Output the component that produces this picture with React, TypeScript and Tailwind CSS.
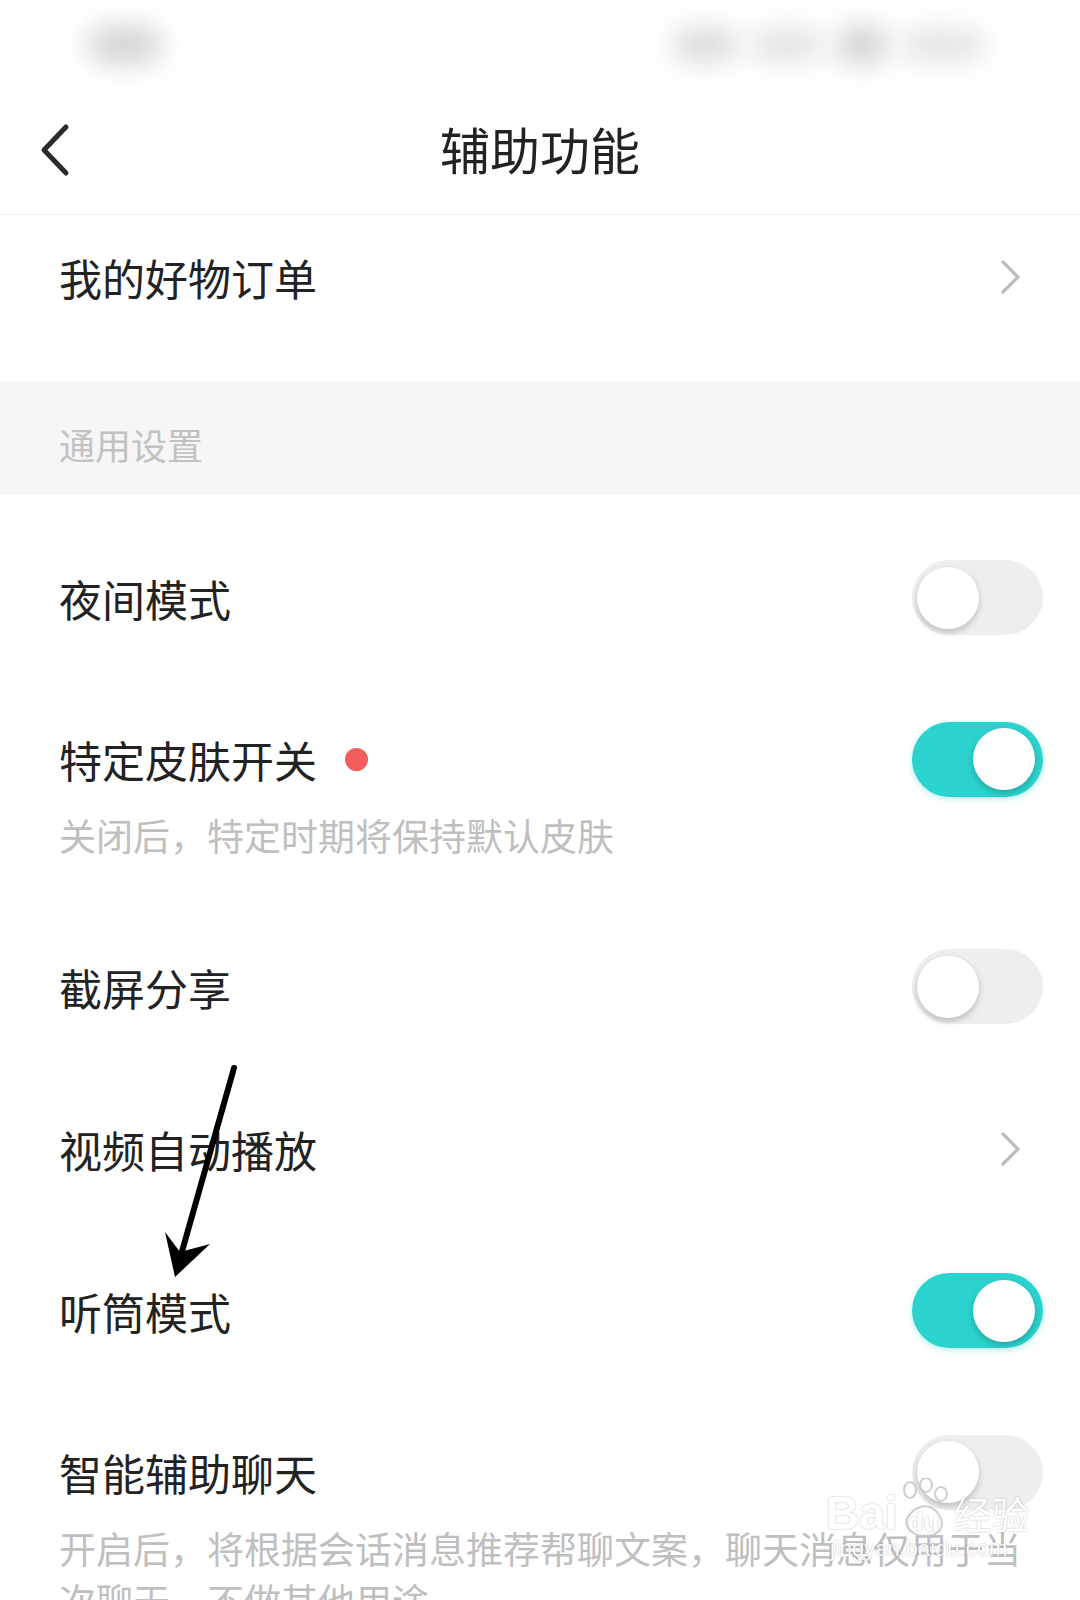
import React from 'react';

const FONT = "font-['Noto_Sans_CJK_SC','Noto_Sans',sans-serif]";

function Toggle({ on }: { on?: boolean }) {
  return (
    <div
      className={`flex h-[75px] w-[131px] shrink-0 items-center rounded-full ${
        on ? 'justify-end bg-[#2bd3ce] pr-[8px] shadow-[0_2px_6px_rgba(43,211,206,0.35)]' : 'justify-start bg-[#eeeeee] pl-[5px]'
      }`}
    >
      <div className="h-[62px] w-[62px] rounded-full bg-white shadow-[0_3px_6px_rgba(0,0,0,0.22)]" />
    </div>
  );
}

function Chevron() {
  return (
    <svg width="22" height="36" viewBox="0 0 22 36" className="shrink-0">
      <polyline points="4,3 19,18 4,33" fill="none" stroke="#bdbdbd" strokeWidth="3.2" strokeLinecap="round" strokeLinejoin="round" />
    </svg>
  );
}

// simple row: title + toggle / chevron
function Row({ title, right, chevron }: { title: string; right?: React.ReactNode; chevron?: boolean }) {
  return (
    <div className={`flex h-[162px] items-center justify-between pb-[5px] pl-[59px] ${chevron ? 'pr-[59px]' : 'pr-[37px]'}`}>
      <span className="text-[43px] leading-[60px] text-[#222]">{title}</span>
      {chevron ? <Chevron /> : right}
    </div>
  );
}

function DescRow({ title, desc, on, dot }: { title: string; desc: string; on?: boolean; dot?: boolean }) {
  return (
    <div className="flex flex-col pb-[47px] pl-[59px] pr-[37px] pt-[48px]">
      <div className="flex h-[60px] items-center justify-between">
        <div className="flex items-center">
          <span className="text-[43px] leading-[60px] text-[#222]">{title}</span>
          {dot && <span className="ml-[28px] h-[23px] w-[23px] rounded-full bg-[#f25d5e]" />}
        </div>
        <Toggle on={on} />
      </div>
      <p className="mt-[20px] pr-[22px] text-[37px] leading-[52px] text-[#bfbfbf]">{desc}</p>
    </div>
  );
}

function Watermark() {
  return (
    <div className="pointer-events-none absolute left-[826px] top-[1478px] flex flex-col items-start text-white opacity-90 [text-shadow:0_0_2px_rgba(0,0,0,0.35)]">
      <div className="flex items-end">
        <span className="font-['Liberation_Sans',sans-serif] text-[46px] font-bold leading-[50px]">Bai</span>
        <div className="relative -mb-[2px] h-[62px] w-[52px]">
          <svg width="52" height="62" viewBox="0 0 52 62" className="absolute left-0 top-0">
            <g fill="none" stroke="#c9c9c9" strokeWidth="2">
              <ellipse cx="12" cy="12" rx="6" ry="8" />
              <ellipse cx="28" cy="7" rx="6" ry="7" />
              <ellipse cx="43" cy="16" rx="6" ry="7" />
              <path d="M10 50 C4 40 16 30 26 28 C38 28 48 42 42 52 C36 60 16 60 10 50 Z" />
            </g>
          </svg>
          <span className="absolute bottom-[4px] left-[10px] font-['Liberation_Sans',sans-serif] text-[26px] font-bold leading-[28px]">du</span>
        </div>
        <span className="ml-[4px] text-[38px] leading-[50px]">经验</span>
      </div>
      <span className="-mt-[2px] ml-[4px] font-['Liberation_Sans',sans-serif] text-[22px] leading-[26px]">jingyan.baidu.com</span>
    </div>
  );
}

export default function App() {
  return (
    <div className={`relative h-[1600px] w-[1080px] overflow-hidden bg-white ${FONT}`}>
      {/* blurred status bar */}
      <div className="flex h-[90px] items-center justify-between pl-[88px] pr-[95px]">
        <div className="h-[36px] w-[74px] rounded-full bg-[#d2d2d2] blur-[14px]" />
        <div className="flex items-center gap-[14px]">
          <div className="h-[32px] w-[64px] rounded-full bg-[#d8d8d8] blur-[14px]" />
          <div className="h-[30px] w-[72px] rounded-full bg-[#e0e0e0] blur-[14px]" />
          <div className="h-[38px] w-[50px] rounded-full bg-[#d0d0d0] blur-[14px]" />
          <div className="h-[30px] w-[84px] rounded-full bg-[#e2e2e2] blur-[14px]" />
        </div>
      </div>

      {/* nav bar */}
      <div className="relative flex h-[125px] items-center justify-center border-b border-[#eeeeee] pb-[8px]">
        <svg width="34" height="54" viewBox="0 0 34 54" className="absolute left-[38px] top-[33px]">
          <polyline points="28,4 6,27 28,50" fill="none" stroke="#2b2b2b" strokeWidth="5" strokeLinecap="round" strokeLinejoin="round" />
        </svg>
        <h1 className="text-[50px] font-normal leading-[60px] text-[#222]">辅助功能</h1>
      </div>

      <div className="flex h-[166px] items-center justify-between pb-[42px] pl-[59px] pr-[59px]">
        <span className="text-[43px] leading-[60px] text-[#222]">我的好物订单</span>
        <Chevron />
      </div>

      <div className="flex h-[114px] items-center bg-[#f6f6f6] pl-[59px] pt-[12px]">
        <span className="text-[36px] leading-[50px] text-[#c2c2c2]">通用设置</span>
      </div>

      <div className="pt-[24px]">
        <Row title="夜间模式" right={<Toggle />} />
        <DescRow title="特定皮肤开关" desc="关闭后，特定时期将保持默认皮肤" on dot />
        <Row title="截屏分享" right={<Toggle />} />
        <Row title="视频自动播放" chevron />
        <Row title="听筒模式" right={<Toggle on />} />
        <DescRow title="智能辅助聊天" desc="开启后，将根据会话消息推荐帮聊文案，聊天消息仅用于当次聊天，不做其他用途" />
      </div>

      {/* hand-drawn annotation arrow */}
      <svg width="1080" height="1600" className="pointer-events-none absolute left-0 top-0">
        <path d="M234 1068 L179 1262" stroke="#000" strokeWidth="6" strokeLinecap="round" fill="none" />
        <polygon points="175,1277 165,1232 180,1252 210,1244" fill="#000" />
      </svg>

      <Watermark />
    </div>
  );
}
